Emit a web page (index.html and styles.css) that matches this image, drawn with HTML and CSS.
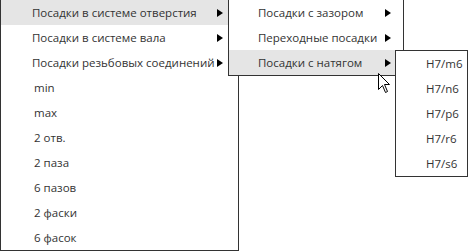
FILE: index.html
```html
<!DOCTYPE html>
<html lang="ru">
<head>
  <meta charset="UTF-8">
  <title>Посадки</title>
  <link rel="stylesheet" href="styles.css">
</head>
<body>
  <div class="menus">
    <ul class="menu main-menu">
      <li class="item active has-sub">Посадки в системе отверстия</li>
      <li class="item has-sub">Посадки в системе вала</li>
      <li class="item has-sub">Посадки резьбовых соединений</li>
      <li class="item">min</li>
      <li class="item">max</li>
      <li class="item">2 отв.</li>
      <li class="item">2 паза</li>
      <li class="item">6 пазов</li>
      <li class="item">2 фаски</li>
      <li class="item">6 фасок</li>
    </ul>

    <ul class="menu sub-menu">
      <li class="item has-sub">Посадки с зазором</li>
      <li class="item has-sub">Переходные посадки</li>
      <li class="item active has-sub">Посадки с натягом</li>
    </ul>

    <ul class="menu fit-menu">
      <li class="item">H7/m6</li>
      <li class="item">H7/n6</li>
      <li class="item">H7/p6</li>
      <li class="item">H7/r6</li>
      <li class="item">H7/s6</li>
    </ul>

    <svg class="cursor" width="13" height="21" viewBox="0 0 13 21">
      <path d="M0.5 0.5 L0.5 16.5 L4.5 12.5 L7.5 19.5 L9.5 18.5 L6.5 11.5 L11.5 11.5 Z" fill="#fff" stroke="#000" stroke-width="1"/>
    </svg>
  </div>
</body>
</html>
```

FILE: styles.css
```css
body {
  margin: 0;
  background: #fff;
  font-family: "Open Sans", "Noto Sans", sans-serif;
  font-size: 11.5px;
  color: #333;
}

.menus {
  position: relative;
  margin-top: -1px;
}

.menu {
  list-style: none;
  margin: 0;
  padding: 0;
  background: #fff;
  border: 1px solid #333;
  box-sizing: border-box;
}

.item {
  position: relative;
  height: 25px;
  line-height: 25px;
  white-space: nowrap;
}

.item.active {
  background: #e5e5e5;
}

.has-sub:after {
  content: '';
  position: absolute;
  top: 9px;
  border-left: 6px solid #000;
  border-top: 4px solid transparent;
  border-bottom: 4px solid transparent;
}

/* main list */
.main-menu {
  width: 239px;
}
.main-menu .item {
  padding-left: 33px;
}
.main-menu .has-sub {
  padding-left: 31px;
}
.main-menu .has-sub:after {
  right: 15px;
}

/* second level, opened over the main list */
.sub-menu {
  position: absolute;
  left: 228px;
  top: 0;
  width: 176px;
}
.sub-menu .item {
  padding-left: 29px;
}
.sub-menu .has-sub:after {
  right: 12px;
}

/* third level */
.fit-menu {
  position: absolute;
  left: 395px;
  top: 51px;
  width: 73px;
}
.fit-menu .item {
  padding-left: 30px;
}

.cursor {
  position: absolute;
  left: 378px;
  top: 74px;
}
```
